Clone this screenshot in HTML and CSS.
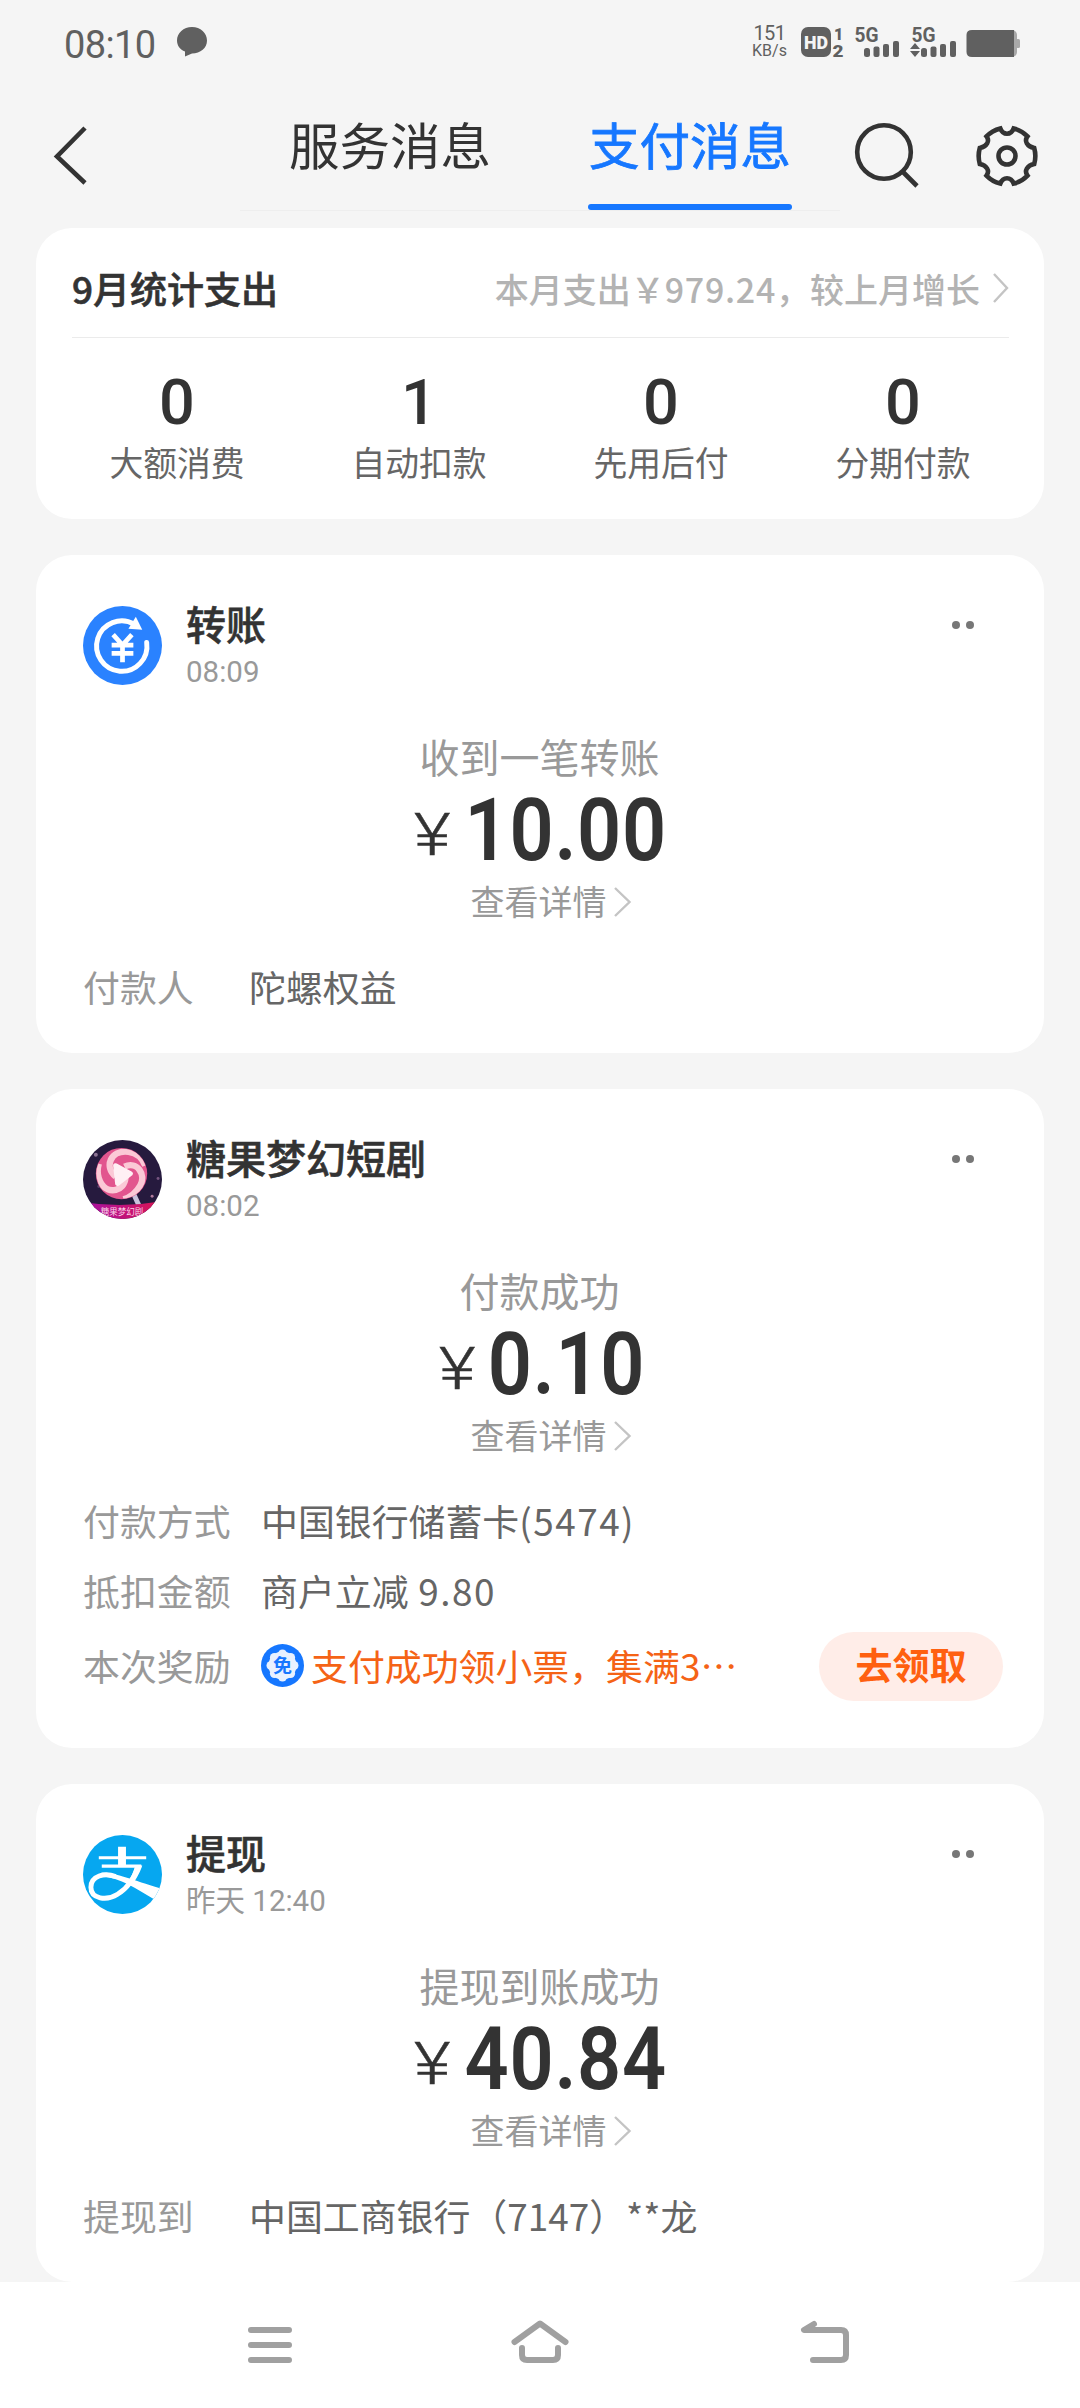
FILE: index.html
```html
<!DOCTYPE html>
<html lang="zh-CN">
<head>
<meta charset="utf-8">
<title>支付消息</title>
<link rel="stylesheet" href="styles.css">
</head>
<body>
<div class="status">
  <span class="clock">08:10</span>
  <svg class="bubble" width="30" height="30" viewBox="0 0 30 30"><path d="M15 0C23.500 0 30 6 30 13.500S23.500 26.500 15 26.500L8 29.500V24.500C3 22.500 0 18.500 0 13.500 0 6 6.500 0 15 0Z"/></svg>
  <div class="net"><span class="rate">151</span><span class="unit">KB/s</span></div>
  <svg class="signals" width="222" height="34" viewBox="799 25 222 34">
    <rect x="801" y="27" width="30" height="30" rx="7"/>
    <text class="hd" x="804" y="49" textLength="24" lengthAdjust="spacingAndGlyphs">HD</text>
    <text class="sim" x="834" y="39.500">1</text><text class="sim" x="832.500" y="57" textLength="11" lengthAdjust="spacingAndGlyphs">2</text>
    <text class="g" x="854.500" y="42" textLength="24" lengthAdjust="spacingAndGlyphs">5G</text>
    <rect x="864" y="48" width="6" height="9" rx="2.500"/><rect x="873.500" y="46.500" width="6" height="10.500" rx="2"/><rect x="883" y="44" width="6" height="13" rx="2"/><rect x="893" y="41" width="6" height="16" rx="2"/>
    <text class="g" x="911.500" y="42" textLength="24" lengthAdjust="spacingAndGlyphs">5G</text>
    <path d="M910 49L915 43 920 49ZM910 51L915 57 920 51Z"/>
    <rect x="921" y="48" width="6" height="9" rx="2.500"/><rect x="930.500" y="46.500" width="6" height="10.500" rx="2"/><rect x="940" y="44" width="6" height="13" rx="2"/><rect x="950" y="41" width="6" height="16" rx="2"/>
    <rect class="light" x="1000" y="30" width="17" height="27" rx="5"/><rect class="light" x="1016" y="39" width="4" height="9" rx="1.500"/>
    <path d="M972 30H1014V57H972Q966.500 57 966.500 52V35Q966.500 30 972 30Z"/>
  </svg>
</div>
<header class="topbar">
  <svg class="back" width="36" height="60" viewBox="0 0 36 60"><path d="M33 3L5 31.500 33 58"/></svg>
  <nav class="tabs"><span class="tab">服务消息</span><span class="tab active">支付消息</span></nav>
  <svg class="search" width="66" height="66" viewBox="0 0 66 66"><circle cx="31" cy="30" r="26.800"/><path d="M49 49L64 64"/></svg>
  <svg class="gear" width="64" height="64" viewBox="-32 -32 64 64"><path d="M27.200 -8A29 29 0 0 1 27.200 8C20 9.500 17 15 20.500 19.600A29 29 0 0 1 6.700 27.600C4 20.500 -4 20.500 -6.700 27.600A29 29 0 0 1 -20.500 19.600C-17 15 -20 9.500 -27.200 8A29 29 0 0 1 -27.200 -8C-20 -9.500 -17 -15 -20.500 -19.600A29 29 0 0 1 -6.700 -27.600C-4 -20.500 4 -20.500 6.700 -27.600A29 29 0 0 1 20.500 -19.600C17 -15 20 -9.500 27.200 -8Z"/><circle r="8.500"/></svg>
</header>
<main>
  <section class="card summary">
    <div class="summary-head"><h2>9月统计支出</h2><span class="trend">本月支出￥<span class="sum">979.24</span>，较上月增长</span><svg width="16" height="30" viewBox="0 0 16 30"><path class="chev" d="M1 1L14 15 1 29"/></svg></div>
    <div class="stats">
      <div class="stat"><b>0</b><span>大额消费</span></div>
      <div class="stat"><b>1</b><span>自动扣款</span></div>
      <div class="stat"><b>0</b><span>先用后付</span></div>
      <div class="stat"><b>0</b><span>分期付款</span></div>
    </div>
  </section>

  <section class="card msg">
    <div class="head">
      <svg class="avatar" viewBox="0 0 80 80"><circle cx="40" cy="40" r="40" fill="#2a82ff"/><path d="M64.500 37A25.500 25.500 0 1 1 52 18.500" fill="none" stroke="#fff" stroke-width="5" stroke-linecap="round"/><path d="M53.500 11L60 24 46 23Z" fill="#fff"/><path d="M30.500 29L40 39.500 49.500 29M40 39V57M29 39.500H51M29 48H51" fill="none" stroke="#fff" stroke-width="4.800"/></svg>
      <div class="who"><h3>转账</h3><time>08:09</time></div><span class="dots"><i></i><i></i></span>
    </div>
    <p class="event">收到一笔转账</p>
    <p class="amount"><span class="yen">¥</span><span class="num">10.00</span></p>
    <p class="detail">查看详情<svg width="18" height="30" viewBox="0 0 18 30"><path class="chev" d="M1 1L15.500 15 1 29"/></svg></p>
    <dl class="rows"><div class="row"><dt>付款人</dt><dd>陀螺权益</dd></div></dl>
  </section>

  <section class="card msg wide">
    <div class="head">
      <svg class="avatar" viewBox="0 0 80 80">
        <defs><clipPath id="c"><circle cx="40" cy="40" r="40"/></clipPath><clipPath id="l"><circle cx="39" cy="34" r="25.500"/></clipPath><linearGradient id="b"><stop offset="0" stop-color="#a511a4"/><stop offset="1" stop-color="#dc1552"/></linearGradient></defs>
        <g clip-path="url(#c)"><rect width="80" height="80" fill="#261a3e"/><circle cx="13" cy="15" r="2" fill="#8c7394"/><circle cx="70" cy="57" r="1.500" fill="#b07a9c"/><circle cx="76" cy="39" r="1.500" fill="#76547f"/><circle cx="16" cy="47" r="1.500" fill="#59416b"/>
        <path d="M51 54L57 67" stroke="#c9c2dc" stroke-width="5"/><circle cx="39" cy="34" r="26" fill="#e2558e"/>
        <g clip-path="url(#l)" fill="none" stroke="#fbc9d6" stroke-width="6.500"><path d="M33 37C21 27 28 10 46 12C54 13 60 18 63 26"/><path d="M42 27C55 21 64 35 58 46C54 53 48 58 41 60"/><path d="M43 38C42 52 26 55 19 45C15 39 14 31 16 24"/></g>
        <path d="M33 26L48 34 35 44Z" fill="#fff0f4" stroke="#fff0f4" stroke-width="5" stroke-linejoin="round"/>
        <path d="M0 63Q40 69 80 62V80H0Z" fill="url(#b)"/><text x="18" y="75.500" font-size="9" fill="#fbd3e7" textLength="43" lengthAdjust="spacingAndGlyphs">糖果梦幻剧</text></g>
      </svg>
      <div class="who"><h3>糖果梦幻短剧</h3><time>08:02</time></div><span class="dots"><i></i><i></i></span>
    </div>
    <p class="event">付款成功</p>
    <p class="amount"><span class="yen">¥</span><span class="num">0.10</span></p>
    <p class="detail">查看详情<svg width="18" height="30" viewBox="0 0 18 30"><path class="chev" d="M1 1L15.500 15 1 29"/></svg></p>
    <dl class="rows">
      <div class="row"><dt>付款方式</dt><dd>中国银行储蓄卡<span class="digits">(5474)</span></dd></div>
      <div class="row"><dt>抵扣金额</dt><dd>商户立减<span class="digits"> 9.80</span></dd></div>
      <div class="row reward"><dt>本次奖励</dt><dd><svg width="43" height="43" viewBox="0 0 43 43"><circle cx="21.500" cy="21.500" r="21.500" fill="#1677ff"/><g fill="#e8f1ff"><circle cx="21.500" cy="21.500" r="14"/><circle cx="21.500" cy="10" r="4.500"/><circle cx="29.600" cy="13.400" r="4.500"/><circle cx="33" cy="21.500" r="4.500"/><circle cx="29.600" cy="29.600" r="4.500"/><circle cx="21.500" cy="33" r="4.500"/><circle cx="13.400" cy="29.600" r="4.500"/><circle cx="10" cy="21.500" r="4.500"/><circle cx="13.400" cy="13.400" r="4.500"/></g><text x="21.500" y="28.500" text-anchor="middle" font-size="19" font-weight="700" fill="#1677ff">免</text></svg><span>支付成功领小票，集满3…</span></dd><button>去领取</button></div>
    </dl>
  </section>

  <section class="card msg">
    <div class="head">
      <svg class="avatar" viewBox="0 0 80 80"><circle cx="40" cy="40" r="40" fill="#06a7f0"/><g clip-path="url(#c)"><path d="M16 23H64M19 31.500H59" stroke="#fff" stroke-width="3.200"/><path d="M39.500 12V31" stroke="#fff" stroke-width="8"/><path d="M56 31C52 44 45 54 35 60C24 67 8 65 8 53C8 41 22 38 33 42" fill="none" stroke="#fff" stroke-width="5"/><path d="M53 31H60C57 40 53 46 50 50L43 51C48 45 51 38 53 31Z" fill="#fff"/><path d="M18 38.500C30 37 48 45 78 54L72 65C55 55 38 43 18 42Z" fill="#fff"/></g></svg>
      <div class="who"><h3>提现</h3><time>昨天 12:40</time></div><span class="dots"><i></i><i></i></span>
    </div>
    <p class="event">提现到账成功</p>
    <p class="amount"><span class="yen">¥</span><span class="num">40.84</span></p>
    <p class="detail">查看详情<svg width="18" height="30" viewBox="0 0 18 30"><path class="chev" d="M1 1L15.500 15 1 29"/></svg></p>
    <dl class="rows"><div class="row"><dt>提现到</dt><dd>中国工商银行（7147）**龙</dd></div></dl>
  </section>
</main>
<footer class="sysnav">
  <svg width="60" height="50" viewBox="240 2320 60 50"><path d="M251 2330H289M251 2345H289M251 2360H289"/></svg>
  <svg class="home" width="66" height="50" viewBox="507 2320 66 50"><path d="M514.500 2342L540 2323.500 565.500 2342M522 2348V2355Q522 2360 527 2360H553Q558 2360 558 2355V2348"/></svg>
  <svg width="60" height="50" viewBox="795 2320 60 50"><path d="M814 2324L804 2330H841Q846 2330 846 2335V2355Q846 2360 841 2360H813"/></svg>
</footer>
</body>
</html>
```
FILE: styles.css
```css
* { box-sizing: border-box; margin: 0; padding: 0; }
body { width: 1080px; height: 2408px; overflow: hidden; background: #f5f5f5; font-family: "Noto Sans CJK SC", sans-serif; color: #333; display: flex; flex-direction: column; }
svg { flex: none; display: block; }
h2, h3 { font-weight: 500; -webkit-text-stroke: 0.6px #333; }

.status { height: 84px; padding: 0 59px 0 64px; display: flex; align-items: center; color: #606060; }
.clock { width: 113px; font: 38px/84px Roboto, sans-serif; letter-spacing: -0.6px; padding-top: 5px; }
.bubble { fill: #606060; }
.net { margin-left: 545px; margin-right: 12px; width: 35px; font-family: Roboto, sans-serif; display: flex; flex-direction: column; align-items: center; }
.rate { font-size: 20px; line-height: 16px; letter-spacing: -0.5px; }
.unit { font-size: 16px; line-height: 16px; margin-top: 2px; }
.signals { fill: #606060; font-family: Roboto, sans-serif; font-weight: 900; overflow: visible; }
.hd { font-size: 19px; fill: #f5f5f5; }
.sim { font-size: 16px; }
.g { font-size: 20px; font-weight: 700; }
.light { fill: #a9a9a9; }

.topbar { height: 144px; padding: 0 40px 0 52px; display: flex; align-items: flex-start; }
.topbar svg { fill: none; stroke: #333; stroke-width: 4.600; }
.back { margin-top: 41px; }
.tabs { width: 600px; height: 127px; margin-left: 152px; display: flex; border-bottom: 1px solid #eee; }
.tab { width: 300px; height: 126px; padding: 22px 0 0; text-align: center; font-size: 50.500px; line-height: 74px; }
.active { position: relative; color: #1677ff; -webkit-text-stroke: 0.8px #1677ff; }
.active::after { content: ""; position: absolute; left: 48px; bottom: 0; width: 204px; height: 6px; border-radius: 3px; background: #1677ff; }
.search { margin: 38px 0 0 13px; }
.gear { margin: 40px 0 0 56px; }

main { flex: none; height: 2054px; padding: 0 36px; display: flex; flex-direction: column; gap: 36px; }
.card { flex: none; background: #fff; border-radius: 36px; }
.chev { fill: none; stroke: #c4c4c4; stroke-width: 2.400; }

.summary { height: 291px; padding: 0 20px; }
.summary-head { height: 110px; margin: 0 15px 0 16px; padding-top: 15px; display: flex; align-items: center; border-bottom: 1px solid #ebebeb; }
.summary-head svg { margin-left: 13px; margin-top: -4px; }
h2 { flex: 1; font-size: 37px; line-height: 50px; padding-bottom: 4px; }
.trend { font-size: 34px; line-height: 50px; font-weight: 500; color: #b3b3b3; padding-bottom: 3px; }
.sum { letter-spacing: 0.700px; }
.stats { display: grid; grid-template-columns: repeat(4, 1fr); text-align: center; }
.stat { display: flex; flex-direction: column; }
.stat b { font: 500 63px/72px Roboto, sans-serif; margin-top: 29px; }
.stat span { font-size: 33.800px; line-height: 46px; color: #666; }

.msg { padding: 51px 41px 37px 47px; }
.wide { padding-bottom: 47px; }
.head { height: 79px; display: flex; }
.avatar { width: 79px; height: 79px; }
.who { flex: 1; padding-left: 24px; }
h3 { font-size: 40px; line-height: 46px; margin-top: -6px; }
time { display: block; font: 29.500px/40px Roboto, "Noto Sans CJK SC", sans-serif; color: #999; margin-top: 6px; }
.dots { display: flex; gap: 6px; padding: 15px 29px 0 0; }
.dots i { width: 8px; height: 8px; border-radius: 50%; background: #777; }
.event { margin: 46px 7px 0 0; font-size: 40px; line-height: 50px; text-align: center; color: #999; }
.amount { height: 97px; display: flex; justify-content: center; align-items: center; font-family: Roboto, sans-serif; }
.yen { font-size: 59px; line-height: 80px; font-weight: 300; margin-top: 11px; margin-right: 16px; transform: scaleX(1.2); -webkit-text-stroke: 0.5px #333; }
.num { font-size: 87px; line-height: 96px; font-weight: 600; letter-spacing: 0.800px; margin: 1px -11px 0 -11px; transform: scaleX(0.89); }
.detail { height: 48px; padding: 0 0 3px 16px; display: flex; justify-content: center; align-items: center; font-size: 34px; line-height: 44px; color: #999; gap: 7px; }
.detail svg { margin-top: 3px; }
.rows { margin-top: 30px; display: flex; flex-direction: column; gap: 10px; }
.row { display: flex; align-items: center; height: 60px; font-size: 36.900px; line-height: 60px; color: #999; }
.row dt { width: 166px; }
.wide dt { width: 178px; }
.row dd { color: #666; white-space: nowrap; }
.digits { letter-spacing: 1.500px; white-space: pre; }
.reward { height: 69px; margin-top: 2px; }
.reward dt { padding-bottom: 3px; }
.reward dd { flex: 1; display: flex; align-items: center; gap: 7px; padding-bottom: 3px; color: #f56316; }
.reward button { width: 184px; height: 69px; border: 0; border-radius: 35px; background: #ffede8; color: #ff6010; font: 700 37px/60px "Noto Sans CJK SC", sans-serif; padding-bottom: 6px; }

.sysnav { height: 126px; background: #fff; padding: 38px 225px 0 240px; display: flex; justify-content: space-between; }
.sysnav svg { fill: none; stroke: #a0a0a0; stroke-width: 6; stroke-linecap: round; stroke-linejoin: round; }
.home { margin-right: 15px; }
```
